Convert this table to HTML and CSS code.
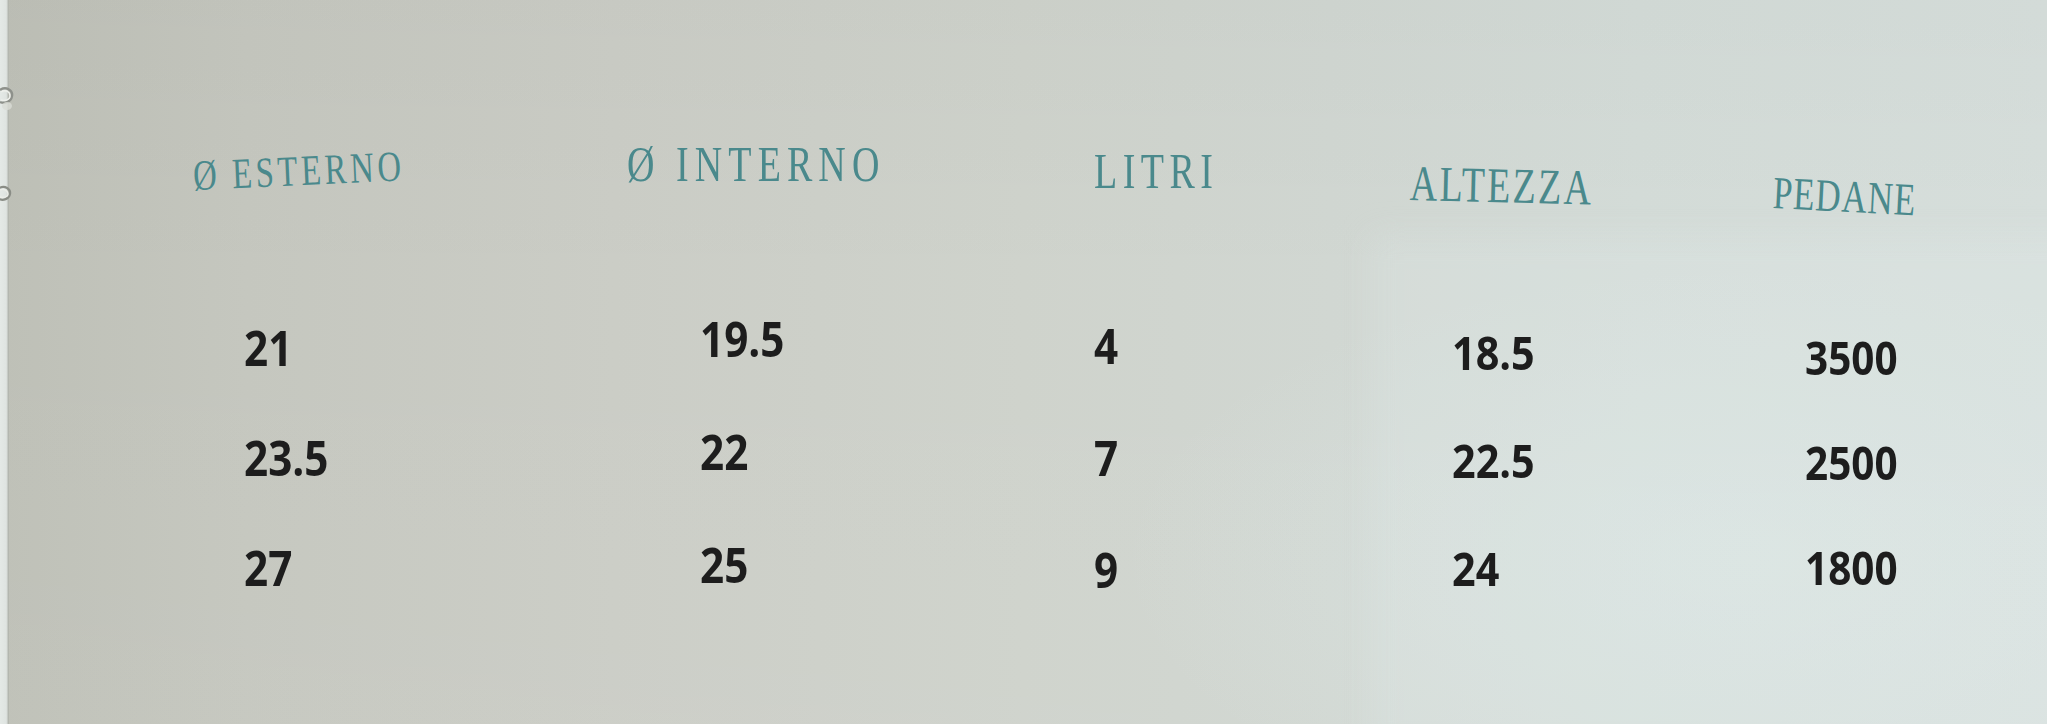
FILE: index.html
```html
<!DOCTYPE html>
<html lang="it">
<head>
<meta charset="utf-8">
<title>Tabella misure</title>
<link rel="stylesheet" href="styles.css">
</head>
<body>
<div class="page">
  <div class="binding">
    <svg class="ring ring-top" width="18" height="28" viewBox="0 0 18 28"><path d="M2 6 C8 2 15 6 14 12 C13 18 6 20 2 18" fill="none" stroke="#8e918b" stroke-width="2.4"/><path d="M3 8 C8 5 12 8 12 12 C12 16 7 17 3 16" fill="none" stroke="#eef0ec" stroke-width="1.4"/><ellipse cx="9" cy="22" rx="5" ry="4" fill="#d9dcd6" opacity=".8"/></svg>
    <svg class="ring ring-bottom" width="16" height="24" viewBox="0 0 16 24"><path d="M1 4 C7 1 13 5 12 10 C11 15 5 17 1 15" fill="none" stroke="#8a8d86" stroke-width="2.2"/><path d="M2 6 C6 4 10 7 10 10 C10 13 6 14 2 13" fill="none" stroke="#eceee9" stroke-width="1.3"/></svg>
  </div>
  <div class="table">
    <div class="col c1">
      <h2 class="head">Ø ESTERNO</h2>
      <ul class="nums"><li>21</li><li>23.5</li><li>27</li></ul>
    </div>
    <div class="col c2">
      <h2 class="head">Ø INTERNO</h2>
      <ul class="nums"><li>19.5</li><li>22</li><li>25</li></ul>
    </div>
    <div class="col c3">
      <h2 class="head">LITRI</h2>
      <ul class="nums"><li>4</li><li>7</li><li>9</li></ul>
    </div>
    <div class="col c4">
      <h2 class="head">ALTEZZA</h2>
      <ul class="nums"><li>18.5</li><li>22.5</li><li>24</li></ul>
    </div>
    <div class="col c5">
      <h2 class="head">PEDANE</h2>
      <ul class="nums"><li>3500</li><li>2500</li><li>1800</li></ul>
    </div>
  </div>
</div>
</body>
</html>
```
FILE: styles.css
```css
html, body {
  margin: 0;
  padding: 0;
}
body {
  width: 2047px;
  height: 724px;
  overflow: hidden;
  background:
    radial-gradient(ellipse 900px 420px at 1750px 560px, rgba(222, 234, 232, 0.5), rgba(222, 234, 232, 0) 70%),
    linear-gradient(180deg, rgba(0, 0, 0, 0.02) 0%, rgba(0, 0, 0, 0) 40%, rgba(255, 255, 255, 0.03) 100%),
    linear-gradient(90deg, #bec0b7 0%, #c5c7bf 12%, #cbcdc6 30%, #cfd3cc 50%, #d1d7d2 65%, #d4dcd8 80%, #d7dfdc 100%);
}
.page {
  display: flex;
  height: 724px;
  position: relative;
}
.page::before {
  content: "";
  position: absolute;
  left: 1370px;
  top: 235px;
  width: 720px;
  height: 520px;
  background: rgba(228, 238, 236, 0.22);
  filter: blur(16px);
  pointer-events: none;
}
.binding {
  width: 9px;
  flex: none;
  background: linear-gradient(90deg, #e4e9e6 0%, #dfe4e1 70%, #a9aca4 100%);
  position: relative;
}
.ring {
  position: absolute;
  left: -2px;
}
.ring-top { top: 84px; }
.ring-bottom { top: 184px; }

.table {
  display: grid;
  grid-template-columns: 434px 467px 316px 363px 1fr;
  padding-left: 184px;
  flex: 1;
  position: relative;
}
.col {
  display: flex;
  flex-direction: column;
  align-items: flex-start;
}
.head {
  margin: var(--ht) 0 0 0;
  font-family: "Liberation Serif", "DejaVu Serif", serif;
  font-weight: normal;
  font-size: var(--hs);
  line-height: 1;
  height: var(--hs);
  letter-spacing: var(--ls);
  color: #4a898c;
  white-space: nowrap;
  transform-origin: 0 50%;
  transform: rotate(var(--rot)) scaleX(0.76);
}
.nums {
  list-style: none;
  margin: var(--nm) 0 0 0;
  padding: 0 0 0 var(--np);
  display: flex;
  flex-direction: column;
  gap: var(--ng);
  font-family: "Open Sans", "Liberation Sans", sans-serif;
  font-weight: 700;
  font-size: var(--ns);
  line-height: 1;
  color: #1d1d1d;
}
.nums li {
  height: var(--ns);
  transform-origin: 0 50%;
  transform: scaleX(0.88);
}

.c1 { --ht: 154px; --hs: 43px; --ls: 4.8px; --rot: -2.6deg; --nm: 127px; --ng: 62px; --np: 51px; --ns: 48px; }
.c2 { --ht: 139px; --hs: 50px; --ls: 8px; --rot: 0deg; --nm: 126px; --ng: 65px; --np: 73px; --ns: 48px; }
.c3 { --ht: 146px; --hs: 50px; --ls: 7.2px; --rot: 0deg; --nm: 126px; --ng: 64px; --np: 0px; --ns: 48px; }
.c4 { --ht: 158px; --hs: 50px; --ls: 3px; --rot: 1.4deg; --nm: 121px; --ng: 61px; --np: 42px; --ns: 47px; }
.c5 { --ht: 170px; --hs: 46px; --ls: 1.2px; --rot: 3deg; --nm: 118px; --ng: 59px; --np: 32px; --ns: 46px; }
```
